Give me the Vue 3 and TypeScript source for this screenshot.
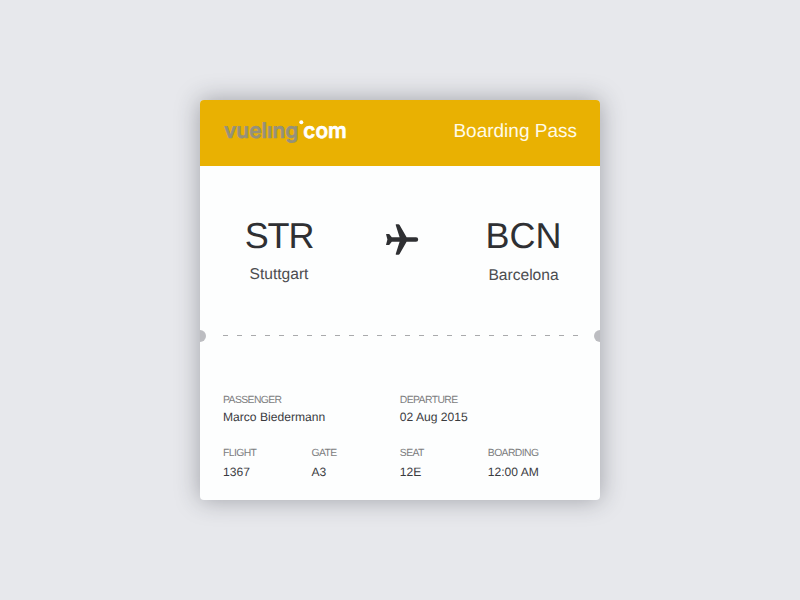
<script setup lang="ts">
interface Airport { code: string; city: string; side: string }
interface Field { label: string; value: string; key: string }

const from: Airport = { code: 'STR', city: 'Stuttgart', side: 'from' }
const to: Airport = { code: 'BCN', city: 'Barcelona', side: 'to' }

const fields: Field[] = [
  { label: 'PASSENGER', value: 'Marco Biedermann', key: 'passenger' },
  { label: 'DEPARTURE', value: '02 Aug 2015', key: 'departure' },
  { label: 'FLIGHT', value: '1367', key: 'flight' },
  { label: 'GATE', value: 'A3', key: 'gate' },
  { label: 'SEAT', value: '12E', key: 'seat' },
  { label: 'BOARDING', value: '12:00 AM', key: 'boarding' },
]
</script>

<template>
  <main class="stage">
    <article class="pass">
      <header class="head">
        <svg class="logo" width="124" height="28" viewBox="0 0 124 28">
          <text class="brand" x="1" y="20" textLength="74.5" lengthAdjust="spacingAndGlyphs">vuelıng</text>
          <circle cx="78.3" cy="4.2" r="2" fill="#fff" />
          <text class="tld" x="80.3" y="20" textLength="43.5" lengthAdjust="spacingAndGlyphs">com</text>
        </svg>
        <h1 class="title">Boarding Pass</h1>
      </header>

      <section class="route">
        <div class="airport" :class="from.side">
          <div class="code">{{ from.code }}</div>
          <div class="city">{{ from.city }}</div>
        </div>
        <svg class="plane" width="34" height="33" viewBox="0 0 34 33">
          <path d="M11.3 1.2h2.1q.8 0 1.2.8L21.6 14.3H31a2.2 2.2 0 0 1 0 4.4H21.6L14.6 31q-.4.8-1.2.8h-2.1q-.8 0-.6-.8L14.6 18.7H6.8L4.2 22H1.5q-.6 0-.4-.6L2.4 16.5 1.1 11.6q-.2-.6.4-.6H4.2L6.8 14.3H14.6L10.7 2q-.2-.8.6-.8Z" />
        </svg>
        <div class="airport" :class="to.side">
          <div class="code">{{ to.code }}</div>
          <div class="city">{{ to.city }}</div>
        </div>
      </section>

      <div class="tear">
        <span class="notch left"></span>
        <span class="dashes"></span>
        <span class="notch right"></span>
      </div>

      <dl class="details">
        <div v-for="f in fields" :key="f.key" class="field" :class="f.key">
          <dt>{{ f.label }}</dt>
          <dd>{{ f.value }}</dd>
        </div>
      </dl>
    </article>
  </main>
</template>

<style>
body { background: #e7e8ec; }
</style>

<style scoped>
.stage {
  width: 800px;
  height: 600px;
  display: flex;
  align-items: center;
  justify-content: center;
  background: #e7e8ec;
  font-family: "Liberation Sans", Arial, sans-serif;
  text-rendering: geometricPrecision;
  color: #2f3033;
}
.pass {
  width: 400px;
  height: 400px;
  display: flex;
  flex-direction: column;
  border-radius: 4px;
  background: #fdfefe;
  box-shadow: 0 0 24px rgba(40, 42, 52, 0.38);
}
.head {
  box-sizing: border-box;
  height: 66px;
  padding: 0 22px 0 23px;
  display: flex;
  justify-content: space-between;
  align-items: flex-start;
  border-radius: 4px 4px 0 0;
  background: #e9b102;
}
.logo { margin-top: 18px; overflow: visible; }
.logo text {
  font-family: Inter, "Open Sans", sans-serif;
  font-weight: 600;
  font-size: 21.5px;
  stroke-width: 0.6px;
  stroke-linejoin: round;
}
.brand { fill: #95917b; stroke: #95917b; }
.tld { fill: #fff; stroke: #fff; }
.title {
  margin: 21px 1px 0 0;
  font-size: 19px;
  line-height: 22px;
  font-weight: 400;
  color: #fffbe8;
}
.route {
  height: 163px;
  display: grid;
  grid-template-columns: 158px 86px 159px;
}
.airport {
  padding-top: 50px;
  display: flex;
  flex-direction: column;
  align-items: center;
}
.code { font-size: 36px; line-height: 40px; }
.from .code { letter-spacing: -1.2px; }
.city {
  margin-top: 10px;
  font-size: 15.6px;
  line-height: 18px;
  color: #4c4d50;
}
.to .city { margin-top: 11px; }
.plane { margin: 57px 0 0 27px; fill: #2f3033; }
.tear {
  height: 14px;
  display: flex;
  align-items: center;
  justify-content: space-between;
}
.notch { width: 6px; height: 12px; background: #bcbdc1; }
.left { border-radius: 0 6px 6px 0; }
.right { border-radius: 6px 0 0 6px; }
.dashes {
  width: 355px;
  height: 1px;
  margin-bottom: 1px;
  background: repeating-linear-gradient(90deg, #a9aaac 0 5px, transparent 5px 14px);
}
.details {
  margin: 51px 0 0 23px;
  display: grid;
  grid-template-columns: 88.5px 88.3px 88px 88px;
  grid-template-rows: 53px 50px;
  white-space: nowrap;
}
.passenger, .departure { grid-column: span 2; }
dt {
  font-size: 10.4px;
  line-height: 13px;
  letter-spacing: -0.6px;
  color: #7c7d80;
}
dd {
  margin: 3px 0 0;
  font-size: 12.1px;
  line-height: 14px;
  color: #3a3b3e;
}
.flight dd, .gate dd, .seat dd, .boarding dd { margin-top: 5px; }
</style>
